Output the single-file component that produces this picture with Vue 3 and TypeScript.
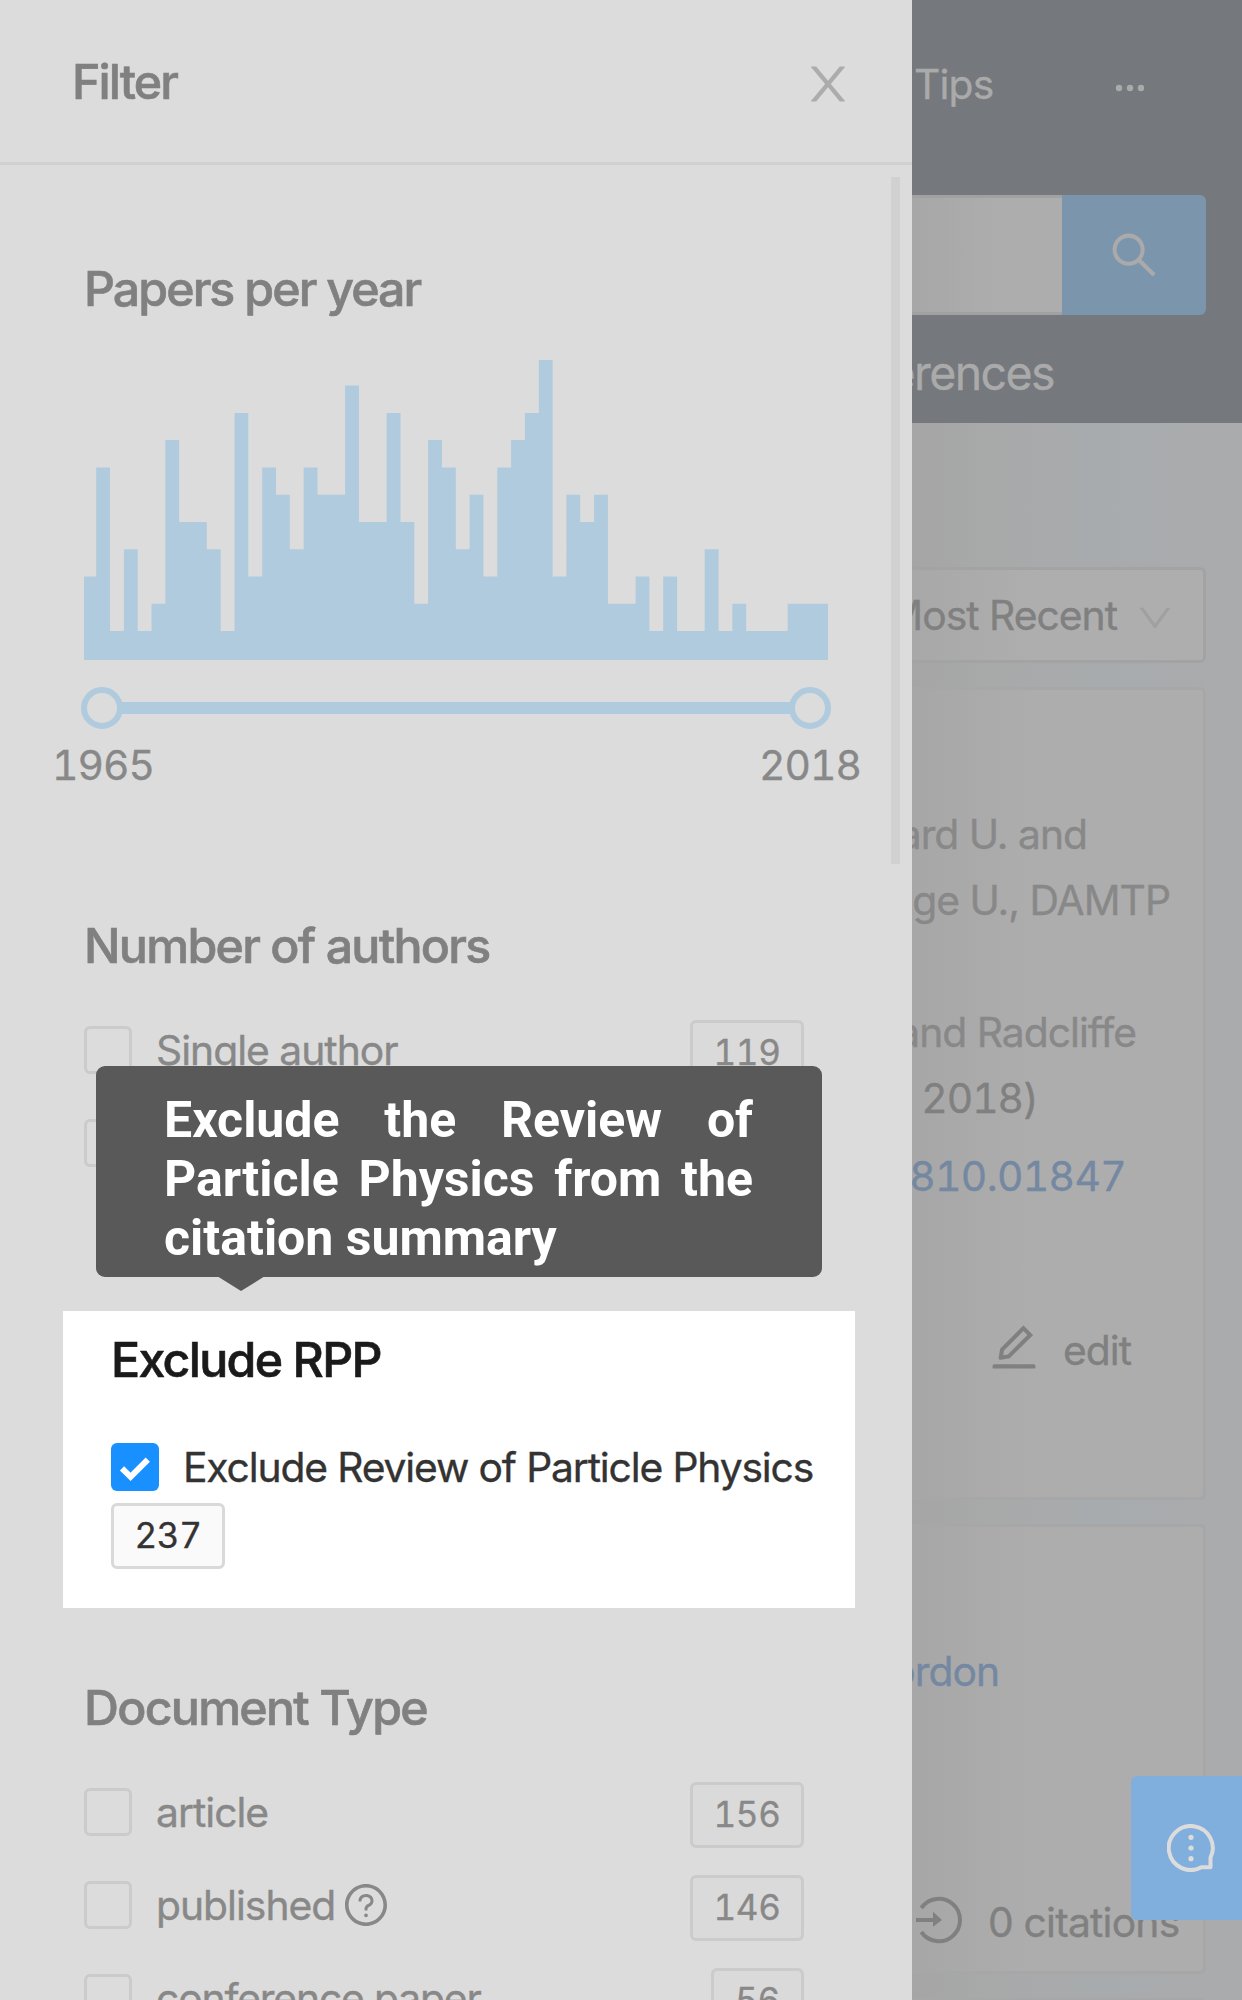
<script setup lang="ts">
interface FilterOption {
  label: string
  count: number
  help?: boolean
}

const papersPerYear: number[] = [
  3, 7, 1, 4, 1, 2, 8, 5, 5, 4, 1, 9, 3, 7, 6, 4, 7, 6, 6, 10, 5, 5, 9, 5, 2, 8, 7,
  4, 6, 3, 7, 8, 9, 11, 3, 6, 5, 6, 2, 2, 3, 1, 3, 1, 1, 4, 1, 2, 1, 1, 1, 2, 2, 2,
]

const chartHeight = 300
const firstBar = 12.2
const barStep = 13.83

const outline: string = (() => {
  let x = 0
  let d = `M0 ${chartHeight}`
  papersPerYear.forEach((n, i) => {
    const y = Math.max(0, chartHeight - n * 27.27 - 1.7).toFixed(1)
    const next = i === 0 ? firstBar : x + barStep
    d += `L${x.toFixed(1)} ${y}L${next.toFixed(1)} ${y}`
    x = next
  })
  return `${d}L${x.toFixed(1)} ${chartHeight}Z`
})()

const authorOptions: FilterOption[] = [{ label: 'Single author', count: 119 }]

const documentTypes: FilterOption[] = [
  { label: 'article', count: 156 },
  { label: 'published', count: 146, help: true },
  { label: 'conference paper', count: 56 },
]
</script>

<template>
  <div class="screen">
    <div class="page">
      <header class="top">
        <div class="nav">
          <span class="tips">Tips</span>
          <svg class="dots" width="30" height="8" viewBox="0 0 30 8">
            <circle cx="4" cy="4" r="3.2" /><circle cx="15" cy="4" r="3.2" /><circle cx="26" cy="4" r="3.2" />
          </svg>
        </div>
        <div class="search">
          <div class="search-input"></div>
          <div class="search-button">
            <svg width="48" height="48" viewBox="64 64 896 896"><path d="M909.6 854.5L649.9 594.8C690.2 542.7 712 479 712 412c0-80.2-31.3-155.4-87.9-212.1-56.6-56.7-132-87.9-212.1-87.9s-155.5 31.3-212.1 87.9C143.2 256.5 112 331.8 112 412c0 80.1 31.3 155.5 87.9 212.1C256.5 680.8 331.8 712 412 712c67 0 130.6-21.8 182.7-62l259.7 259.6a8.2 8.2 0 0 0 11.6 0l43.6-43.5a8.2 8.2 0 0 0 0-11.6zM570.4 570.4C528 612.7 471.8 636 412 636s-116-23.3-158.4-65.6C211.3 528 188 471.8 188 412s23.3-116.1 65.6-158.4C296 211.3 352.2 188 412 188s116.1 23.2 158.4 65.6S636 352.2 636 412s-23.3 116.1-65.6 158.4z" /></svg>
          </div>
        </div>
        <div class="tabs"><span>erences</span></div>
      </header>

      <div class="sort">
        <span class="sort-text">Most Recent</span>
        <svg width="36" height="36" viewBox="64 64 896 896"><path d="M884 256h-75c-5.1 0-9.9 2.5-12.9 6.6L512 654.2 227.9 262.6c-3-4.1-7.8-6.6-12.9-6.6h-75c-6.5 0-10.3 7.4-6.5 12.7l352.6 486.1c12.8 17.6 39 17.6 51.7 0l352.6-486.1c3.9-5.3.1-12.7-6.4-12.7z" /></svg>
      </div>

      <article class="card first">
        <p class="line aff1">ard U. and</p>
        <p class="line aff2">ge U., DAMTP</p>
        <p class="line blank"></p>
        <p class="line aff3">and Radcliffe</p>
        <p class="line date">2018)</p>
        <p class="line eprint">810.01847</p>
        <div class="edit">
          <svg width="48" height="48" viewBox="64 64 896 896"><path d="M257.7 752c2 0 4-.2 6-.5L431.9 722c2-.4 3.9-1.3 5.3-2.8l423.9-423.9a9.96 9.96 0 0 0 0-14.1L694.9 114.9c-1.9-1.9-4.4-2.9-7.1-2.9s-5.2 1-7.1 2.9L256.8 538.8c-1.5 1.5-2.4 3.3-2.8 5.3l-29.5 168.2a33.5 33.5 0 0 0 9.4 29.8c6.6 6.4 14.9 9.9 23.8 9.9zm67.4-174.4L687.8 215l73.3 73.3-362.7 362.6-88.9 15.7 15.6-89zM880 836H144c-17.7 0-32 14.3-32 32v36c0 4.4 3.6 8 8 8h784c4.4 0 8-3.6 8-8v-36c0-17.7-14.3-32-32-32z" /></svg>
          <span>edit</span>
        </div>
      </article>

      <article class="card second">
        <p class="line author">ordon</p>
        <div class="cites">
          <svg width="48" height="48" viewBox="0 0 48 48">
            <path d="M5.3 12A21.2 21.2 0 1 1 5.3 36" fill="none" stroke="currentColor" stroke-width="4" />
            <path d="M0 22h17v-6.2L26 24l-9 6.8V26H0z" fill="currentColor" />
          </svg>
          <span>0 citations</span>
        </div>
      </article>
      <article class="card third"></article>
    </div>

    <aside class="drawer">
      <header class="drawer-head">
        <h2>Filter</h2>
        <svg width="48" height="48" viewBox="64 64 896 896"><path d="M563.8 512l262.5-312.9c4.4-5.2.7-13.1-6.1-13.1h-79.8c-4.7 0-9.2 2.1-12.3 5.7L511.6 449.8 295.1 191.7c-3-3.6-7.5-5.7-12.3-5.7H203c-6.8 0-10.5 7.9-6.1 13.1L459.4 512 196.9 824.9A7.95 7.95 0 0 0 203 838h79.8c4.7 0 9.2-2.1 12.3-5.7l216.5-258.1 216.5 258.1c3 3.6 7.5 5.7 12.3 5.7h79.8c6.8 0 10.5-7.9 6.1-13.1L563.8 512z" /></svg>
      </header>
      <div class="scrollbar"></div>

      <section class="years">
        <h3 class="t-papers">Papers per year</h3>
        <svg class="chart" width="744" height="300" viewBox="0 0 744 300"><path :d="outline" /></svg>
        <div class="slider"><i class="handle"></i><i class="track"></i><i class="handle"></i></div>
        <div class="range"><span>1965</span><span>2018</span></div>
      </section>

      <section class="authors">
        <h3 class="t-authors">Number of authors</h3>
        <div v-for="o in authorOptions" :key="o.label" class="row">
          <i class="box"></i><span class="label">{{ o.label }}</span><b class="count">{{ o.count }}</b>
        </div>
        <div class="row"><i class="box"></i></div>
        <div class="tooltip">Exclude the Review of Particle Physics from the citation summary</div>
      </section>

      <section class="rpp">
        <h3 class="t-rpp">Exclude RPP</h3>
        <div class="row">
          <i class="box checked"><svg width="48" height="48" viewBox="0 0 48 48"><path d="M11 25.3L19.6 33.8L36.8 16.6" fill="none" stroke="#fff" stroke-width="6" /></svg></i>
          <span class="label">Exclude Review of Particle Physics</span>
        </div>
        <b class="count">237</b>
      </section>

      <section class="types">
        <h3 class="t-types">Document Type</h3>
        <div v-for="o in documentTypes" :key="o.label" class="row">
          <i class="box"></i>
          <span class="label">{{ o.label }}</span>
          <svg v-if="o.help" class="help" width="42" height="42" viewBox="64 64 896 896"><path d="M512 64C264.6 64 64 264.6 64 512s200.6 448 448 448 448-200.6 448-448S759.4 64 512 64zm0 820c-205.4 0-372-166.6-372-372s166.6-372 372-372 372 166.6 372 372-166.6 372-372 372z" /><path d="M623.6 316.7C593.6 290.4 554 276 512 276s-81.6 14.5-111.6 40.7C369.2 344 352 380.7 352 420v7.6c0 4.4 3.6 8 8 8h48c4.4 0 8-3.6 8-8V420c0-44.1 43.1-80 96-80s96 35.9 96 80c0 31.1-22 59.6-56.1 72.7-21.2 8.1-39.2 22.3-52.1 40.9-13.1 19-19.9 41.8-19.9 64.9V620c0 4.4 3.6 8 8 8h48c4.4 0 8-3.6 8-8v-22.7a48.3 48.3 0 0 1 30.9-44.8c59-22.7 97.1-74.7 97.1-132.5.1-39.3-17.1-76-48.3-103.3zM472 732a40 40 0 1 0 80 0 40 40 0 1 0-80 0z" /></svg>
          <b class="count" :class="{ short: o.count < 100 }">{{ o.count }}</b>
        </div>
      </section>
    </aside>

    <div class="feedback">
      <svg width="48" height="48" viewBox="0 0 48 48">
        <path d="M34.3 43.3A22 22 0 1 1 43.5 33.7V43.3Z" fill="none" stroke="currentColor" stroke-width="4" stroke-linejoin="round" />
        <circle cx="24" cy="13.3" r="2.6" /><circle cx="24" cy="24" r="2.6" /><circle cx="24" cy="34.7" r="2.6" />
      </svg>
    </div>
  </div>
</template>

<style scoped>
.screen {
  position: relative;
  width: 1242px;
  height: 2000px;
  overflow: hidden;
  font-family: Inter, "Liberation Sans", sans-serif;
  font-size: 40.8px;
  letter-spacing: -1px;
  -webkit-text-stroke-width: 0.35px;
  color: #888;
  background: linear-gradient(90deg, #a5a5a5 912px, #a8a9a9 990px, #a8abad 1090px, #a9abad);
}
h2, h3, p { margin: 0; }
i, b { font-style: normal; font-weight: 400; }
svg { display: block; flex: none; fill: currentColor; }

.top {
  height: 423px;
  box-sizing: border-box;
  display: flex;
  flex-direction: column;
  background: #75787d;
  color: #aaa;
}
.nav { height: 195px; display: flex; padding: 54px 0 0 914px; box-sizing: border-box; }
.tips { line-height: 60px; width: 201px; letter-spacing: -0.8px; }
.dots { margin-top: 30px; }
.search { display: flex; height: 120px; width: 1206px; }
.search-input {
  width: 1062px;
  box-sizing: border-box;
  border: solid #a1a1a1;
  border-width: 3px 0;
  background: linear-gradient(90deg, #a7a7a7 912px, #adadad 1000px);
}
.search-button {
  width: 144px;
  display: flex;
  align-items: center;
  justify-content: center;
  background: #7b95ad;
  border-radius: 0 6px 6px 0;
}
.tabs { width: 1054px; text-align: right; line-height: 60px; margin-top: 28px; font-size: 46.5px; letter-spacing: -1.6px; }

.sort {
  margin: 144px 0 0 700px;
  width: 506px;
  height: 96px;
  box-sizing: border-box;
  border: 3px solid #a3a3a3;
  border-radius: 6px;
  background: linear-gradient(90deg, #a8a8a8 212px, #aeaeae 330px);
  display: flex;
  justify-content: flex-end;
  align-items: center;
  padding-right: 30px;
  color: #808080;
}
.sort-text { margin-right: 20px; }
.sort svg { margin-top: 5px; color: #a0a0a0; }

.card {
  width: 506px;
  margin-left: 700px;
  box-sizing: border-box;
  border: 3px solid #a7a7a7;
  border-radius: 6px;
  background: linear-gradient(90deg, #a7a7a7 212px, #adadad 330px);
}
.first { margin-top: 24px; height: 813px; padding-top: 111px; }
.second { margin-top: 24px; height: 450px; padding-top: 111px; }
.third { margin-top: 24px; height: 200px; }
.line { height: 66px; line-height: 66px; text-align: right; white-space: nowrap; }
.aff1 { padding-right: 116px; }
.aff2 { padding-right: 33px; }
.aff3 { padding-right: 67px; }
.date { padding-right: 165px; color: #808080; letter-spacing: -1px; font-variant-numeric: tabular-nums; }
.eprint { padding-right: 77px; margin-top: 12px; color: #7488a1; letter-spacing: -0.65px; font-variant-numeric: tabular-nums; }
.edit { display: flex; align-items: center; margin: 111px 0 0 287px; height: 60px; color: #808080; }
.edit span { margin-left: 25px; }
.edit svg { margin-top: -6px; }
.author { padding-right: 204px; color: #7488a1; }
.cites { display: flex; align-items: center; height: 60px; margin: 188px 0 0 213px; color: #808080; }
.cites span { margin-left: 24px; letter-spacing: -0.8px; }
.cites svg { margin-top: -5px; }

.drawer {
  position: absolute;
  inset: 0 auto 0 0;
  width: 912px;
  background: #dcdcdc;
}
.drawer-head {
  height: 165px;
  box-sizing: border-box;
  border-bottom: 3px solid #d0d0d0;
  display: flex;
  align-items: center;
  justify-content: space-between;
  padding: 2px 60px 0 72px;
}
.drawer-head svg { color: #acacac; margin-top: 3px; }
h2, h3 {
  font-size: 48.3px;
  line-height: 60px;
  font-weight: 500;
  -webkit-text-stroke-width: 0.6px;
  color: #808080;
  white-space: nowrap;
}
h2 { letter-spacing: -1.9px; }
h3 { letter-spacing: -1.7px; }
.t-papers { letter-spacing: -1.95px; }
.scrollbar { position: absolute; left: 891px; top: 177px; width: 9px; height: 687px; background: #d1d1d1; }

section { padding-left: 84px; }
.years { padding-top: 94px; }
.chart { margin-top: 41px; color: #b0cbdd; }
.slider { width: 750px; margin: 27px 0 0 -3px; height: 42px; display: flex; align-items: center; }
.handle { width: 30px; height: 30px; border: 6px solid #b0cbdd; border-radius: 50%; }
.track { flex: 1; height: 12px; margin: 0 -1px; background: #b0cbdd; }
.range {
  display: flex;
  justify-content: space-between;
  width: 813px;
  margin: 12px 0 0 -34px;
  line-height: 48px;
  letter-spacing: -0.9px;
  font-variant-numeric: tabular-nums;
}
.range span { width: 106px; text-align: center; }

.authors { position: relative; padding-top: 127px; }
.row { display: flex; width: 720px; height: 66px; margin-top: 27px; }
h3 + .row { margin-top: 44px; }
.box { width: 48px; height: 48px; margin-top: 6px; box-sizing: border-box; border: 3px solid #cbcbcb; border-radius: 6px; flex: none; }
.label { margin-left: 24px; line-height: 60px; white-space: nowrap; }
.count {
  box-sizing: border-box;
  height: 66px;
  width: 114px;
  margin-left: auto;
  border: 3px solid #cbcbcb;
  border-radius: 6px;
  background: #dadada;
  font-size: 35px;
  line-height: 58px;
  letter-spacing: -0.4px;
  font-variant-numeric: tabular-nums;
  text-align: center;
}
.short { width: 93px; }
.tooltip {
  position: absolute;
  left: 96px;
  top: 277px;
  width: 726px;
  height: 210.5px;
  box-sizing: border-box;
  padding: 25px 69px 0 68px;
  border-radius: 9px;
  background: #595959;
  color: #fff;
  font: 700 50px/59px Roboto, "Liberation Sans", sans-serif;
  letter-spacing: 0;
  -webkit-text-stroke-width: 0;
  text-align: justify;
}
.tooltip::after {
  content: "";
  position: absolute;
  left: 121px;
  top: 210px;
  border: solid transparent;
  border-width: 15px 24px 0;
  border-top-color: #595959;
}

.rpp { width: 792px; height: 297px; box-sizing: border-box; margin: 132px 0 0 63px; padding: 19px 0 0 48px; background: #fff; color: #333; }
.rpp h3 { color: #1a1a1a; }
.rpp .row { height: 60px; margin-top: 47px; }
.rpp .label { letter-spacing: -1.15px; }
.checked { border: 0; background: #1890ff; }
.rpp .count { display: block; margin: 6px 0 0; background: #fafafa; border-color: #d9d9d9; }

.types { padding-top: 70px; }
.types .row:last-child .label { letter-spacing: -1.15px; }
.help { margin: 9px 0 0 10px; }

.feedback {
  position: absolute;
  right: 0;
  top: 1776px;
  width: 111px;
  height: 144px;
  box-sizing: border-box;
  padding: 48px 0 0 36px;
  border-radius: 6px 0 0 6px;
  background: #80aedd;
  color: #dcdcdc;
}
</style>

<style>
body { margin: 0; }
</style>
